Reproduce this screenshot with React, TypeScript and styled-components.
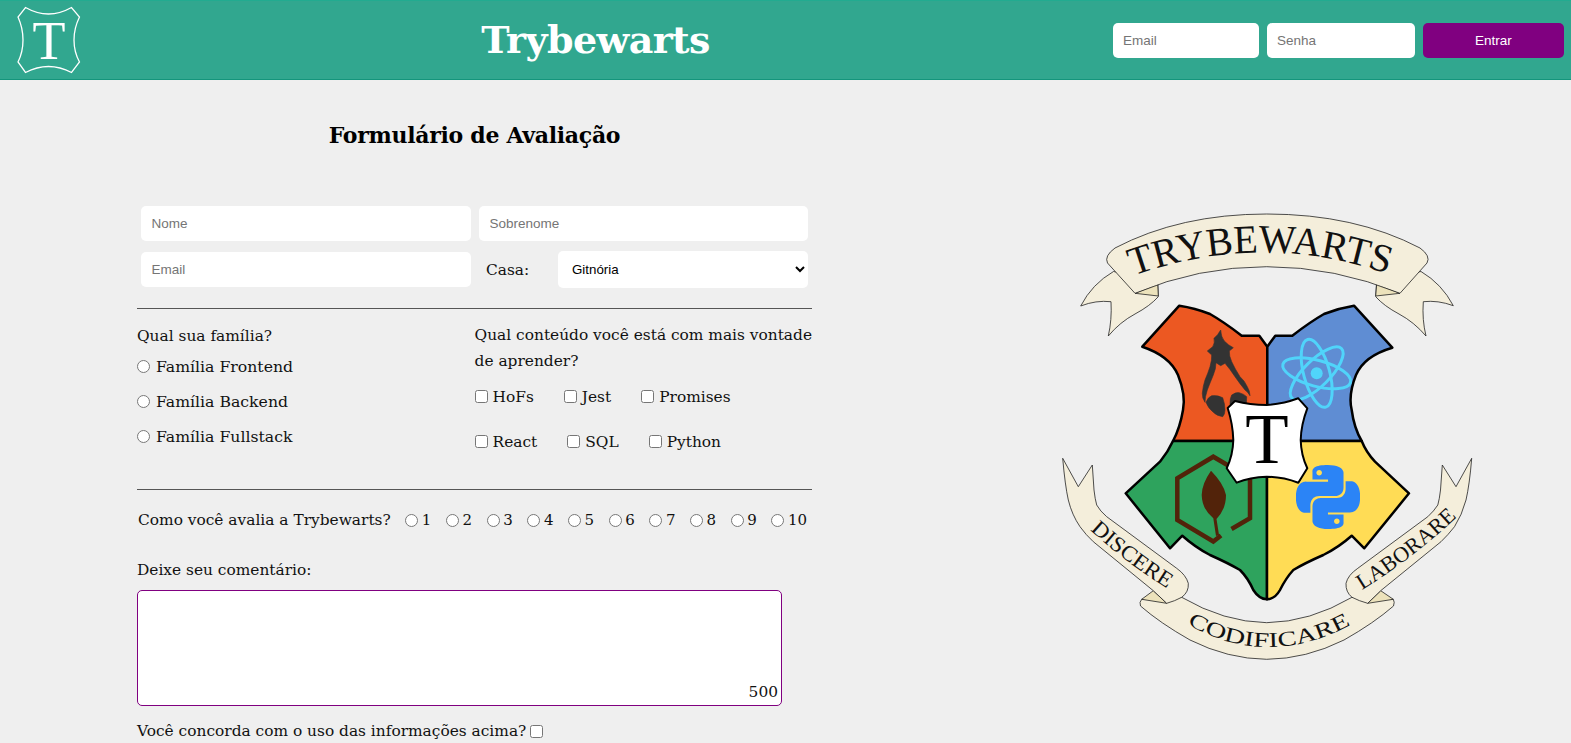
import * as React from 'react'
import styled, { createGlobalStyle } from 'styled-components'
import { SiPython } from 'react-icons/si'

const bodyFont = '"DejaVu Serif", "Liberation Serif", serif'
const controlFont = '"Liberation Sans", Arial, sans-serif'
const purple = '#800080'
const parchment = '#f4eedb'

const GlobalStyle = createGlobalStyle`
  html, body {
    margin: 0;
    height: 100%;
    overflow: hidden;
    background: #efefef;
  }

  body {
    font-family: ${bodyFont};
    font-size: 15.4px;
    color: #111;
  }

  * {
    box-sizing: border-box;
  }
`

const Header = styled.header`
  display: flex;
  align-items: center;
  justify-content: space-between;
  height: 80px;
  padding: 0 7px 0 17px;
  background: #31a78f;
  border-top: 1px solid #22ab90;
  border-bottom: 1px solid #14957c;
`

const Logo = styled.svg`
  display: block;
  width: 64px;
  height: 68px;
`

const Title = styled.h1`
  margin: 0 3px 0 0;
  color: #fff;
  font-size: 38px;
  line-height: 48px;
  font-weight: 700;
  letter-spacing: -0.6px;
`

const LoginForm = styled.form`
  display: flex;
  gap: 8px;
`

const LoginInput = styled.input<{ $width: number }>`
  width: ${props => props.$width}px;
  height: 35px;
  padding: 0 10px;
  border: 0;
  border-radius: 5px;
  background: #fff;
  font-family: ${controlFont};
  font-size: 13.5px;
  outline: none;
`

const LoginButton = styled.button`
  width: 141px;
  height: 35px;
  border: 0;
  border-radius: 5px;
  background: ${purple};
  color: #fff;
  font-family: ${controlFont};
  font-size: 13.5px;
`

const Main = styled.main`
  display: flex;
  align-items: flex-start;
  padding-left: 137px;
`

const EvaluationForm = styled.form`
  width: 675px;
  flex: none;
`

const FormTitle = styled.h2`
  margin: 35px 0 0;
  font-size: 22px;
  line-height: 40px;
  font-weight: 700;
  text-align: center;
  letter-spacing: -0.3px;
  color: #000;
`

const Fields = styled.div`
  display: grid;
  grid-template-columns: 330px 329px;
  grid-template-rows: 35px 37px;
  column-gap: 8px;
  row-gap: 10px;
  margin-top: 51px;
  padding: 0 4px;
`

const TextField = styled.input`
  width: 100%;
  height: 35px;
  padding: 0 10.5px;
  border: 0;
  border-radius: 5px;
  background: #fff;
  font-family: ${controlFont};
  font-size: 13.5px;
  align-self: center;
`

const HouseField = styled.label`
  display: flex;
  align-items: center;
  justify-content: space-between;
  padding-left: 7px;
`

const HouseSelect = styled.select`
  width: 250px;
  height: 37px;
  padding: 0 10px;
  border: 0;
  border-radius: 5px;
  background: #fff;
  color: #000;
  font-family: ${controlFont};
  font-size: 13.33px;
`

const Divider = styled.hr<{ $top: number }>`
  height: 1px;
  margin: ${props => props.$top}px 0 0;
  border: 0;
  background: #555;
`

const Preferences = styled.div`
  display: flex;
  margin-top: 14px;
`

const FamilyColumn = styled.fieldset`
  width: 338px;
  margin: 0;
  padding: 0;
  border: 0;
`

const ContentColumn = styled.fieldset`
  width: 337px;
  margin: -1px 0 0;
  padding: 0;
  border: 0;
`

const Question = styled.p`
  margin: 0;
  line-height: 26px;
  white-space: nowrap;
`

const Option = styled.label`
  display: flex;
  align-items: center;
  gap: 5px;
  height: 35px;
  white-space: nowrap;

  input {
    margin: 0;
    flex: none;
  }
`

const FamilyOption = styled(Option)`
  gap: 6px;
  font-size: 15.7px;
`

const CheckRow = styled.div`
  display: flex;
  align-items: center;
  gap: 30px;
  height: 45px;
`

const CheckOption = styled(Option)`
  height: auto;
`

const Rating = styled.div`
  display: flex;
  align-items: center;
  justify-content: space-between;
  height: 26px;
  margin-top: 17px;
  padding: 0 5px 0 1px;
`

const RatingLabel = styled.span`
  white-space: nowrap;
`

const RatingOption = styled(Option)`
  height: auto;
  gap: 3.5px;
  font-size: 15px;
`

const CommentLabel = styled.label`
  display: block;
  margin-top: 24px;
  line-height: 26px;
`

const CommentBox = styled.div`
  position: relative;
  width: 645px;
  height: 116px;
  margin-top: 7px;
`

const Comment = styled.textarea`
  display: block;
  width: 100%;
  height: 100%;
  border: 1px solid ${purple};
  border-radius: 5px;
  background: #fff;
  resize: none;
`

const Counter = styled.span`
  position: absolute;
  right: 4px;
  bottom: 4px;
  font-size: 15.4px;
  line-height: 20px;
  pointer-events: none;
`

const Agreement = styled.label`
  display: flex;
  align-items: center;
  gap: 4px;
  height: 26px;
  margin-top: 12px;
  white-space: nowrap;

  input {
    margin: 0;
  }
`

const Crest = styled.svg`
  display: block;
  flex: none;
  width: 420px;
  height: 455px;
  margin: 130px 0 0 243px;
`

const BannerText = styled.text<{ $size: number }>`
  font-family: "Liberation Serif", serif;
  font-size: ${props => props.$size}px;
  fill: #111;
`

const CrestLetter = styled.text`
  font-family: "Liberation Serif", serif;
  font-size: 71px;
  fill: #000;
  text-anchor: middle;
`

const LogoLetter = styled.text`
  font-family: "Liberation Serif", serif;
  font-size: 54px;
  fill: #fff;
  text-anchor: middle;
`

const families = ['Família Frontend', 'Família Backend', 'Família Fullstack']
const contentRows = [
  ['HoFs', 'Jest', 'Promises'],
  ['React', 'SQL', 'Python']
]
const ratings = ['1', '2', '3', '4', '5', '6', '7', '8', '9', '10']

const HeaderLogo = () => (
  <Logo viewBox="17 6 64 68" aria-hidden="true">
    <path
      d="M25.5 7.5 Q37 14 48.5 14 Q60 14 71.5 7.5 L79.5 17 Q74 28 74 40 Q74 52 79.5 62 L71.5 72.5 Q60 66.5 48.5 66.5 Q37 66.5 25.5 72.5 L18 62 Q23 52 23 40 Q23 28 18 17 Z"
      fill="none"
      stroke="#fff"
      strokeWidth="1.3"
    />
    <LogoLetter x="49" y="59">T</LogoLetter>
  </Logo>
)

const CrestImage = () => (
  <Crest viewBox="1055 210 420 455" role="img" aria-label="Brasão da Trybewarts">
    <defs>
      <path id="arc-top" d="M1133 276 Q1260 230 1388 274" />
      <path id="arc-left" d="M1090 530 Q1125 562 1168 589" />
      <path id="arc-middle" d="M1187 624 Q1267 670 1352 624" />
      <path id="arc-right" d="M1362 590 Q1415 557 1458 516" />
    </defs>

    <g fill={parchment} stroke="#222" strokeWidth="0.8" strokeLinejoin="round">
      <path d="M1113.5 271.5 Q1092 284 1080.7 306 Q1096 300 1111 301.7 Q1112 320 1108.3 336 Q1120 322 1135 314 Q1150 306 1158.3 296.7 L1157.7 280 Z" />
      <path d="M1421 271.5 Q1442 284 1453.3 305.7 Q1438 300 1423.3 301.7 Q1422 320 1426 336 Q1414 322 1399 314 Q1384 306 1375.7 296.7 L1376.7 280 Z" />
      <path d="M1135 293.3 L1158.3 296 L1157.7 284 Z" fill="#ece2bb" />
      <path d="M1400 293.3 L1375.7 296 L1376.7 284 Z" fill="#ece2bb" />
      <path d="M1135 293.3 L1107.5 263 Q1104 256 1115 248 Q1180 214 1266.7 214 Q1355 214 1420 248 Q1431 256 1427 263 L1400 293.3 Q1335 266.7 1266.7 266.7 Q1198 266.7 1135 293.3 Z" />

      <path d="M1141.7 599.3 Q1139 602 1140.5 606 Q1160 623 1190 640 Q1228 659 1266.7 659.3 Q1306 659 1344 640 Q1374 623 1393.5 606 Q1395 602 1393.3 599.3 L1352 597.3 Q1310 622 1266.7 622.7 Q1224 622 1181.7 597.3 Z" />
      <path d="M1141.7 599.3 L1153.3 590.7 L1166.7 603.3 Z" fill="#ece2bb" />
      <path d="M1393.3 599.3 L1380.7 590.7 L1367.7 603.3 Z" fill="#ece2bb" />
      <path d="M1062.7 458.3 L1078.3 486.7 L1092.3 465 L1094 490 Q1095 499 1096.7 505 Q1100 511 1106.7 516.7 L1176.7 568.3 Q1186 575 1188.3 583.3 Q1189 592 1181.7 597.3 Q1175 601 1166.7 603.3 L1153.3 590.7 L1093.3 541.7 Q1086 535 1080 526.7 Q1072 515 1068.3 500 Q1065 485 1062.7 458.3 Z" />
      <path d="M1471.7 458.3 L1456 486.7 L1442.3 465 L1440.5 490 Q1439.5 499 1437.8 505 Q1434 511 1427.8 516.7 L1357.8 568.3 Q1348 575 1346 583.3 Q1345.5 592 1352 597.3 Q1359 601 1367.7 603.3 L1380.7 590.7 L1441 541.7 Q1448 535 1454.5 526.7 Q1462 515 1466 500 Q1469.5 485 1471.7 458.3 Z" />
    </g>

    <BannerText $size={40}>
      <textPath href="#arc-top" textLength="260" lengthAdjust="spacingAndGlyphs">TRYBEWARTS</textPath>
    </BannerText>
    <BannerText $size={22}>
      <textPath href="#arc-left" textLength="97" lengthAdjust="spacingAndGlyphs">DISCERE</textPath>
    </BannerText>
    <BannerText $size={21}>
      <textPath href="#arc-middle" textLength="172" lengthAdjust="spacingAndGlyphs">CODIFICARE</textPath>
    </BannerText>
    <BannerText $size={22}>
      <textPath href="#arc-right" textLength="120" lengthAdjust="spacingAndGlyphs">LABORARE</textPath>
    </BannerText>

    <g stroke="#000" strokeWidth="2.5" strokeLinejoin="round">
      <path
        fill="#ec5822"
        d="M1267.3 346.7 L1259.3 335.7 L1241.7 335.7 Q1224 322 1210 314 Q1195 308 1179.3 305.7 L1142.3 346.7 Q1170 356 1178 375 Q1186 395 1183 410 Q1180 428 1173 441 L1267.3 441 Z"
      />
      <path
        fill="#5f8dd3"
        d="M1267.3 346.7 L1275.3 335.7 L1292.3 335.7 Q1310 322 1324 314 Q1339 308 1354 305.7 L1392.3 347.7 Q1364 356 1356 375 Q1348 395 1351.7 410 Q1354 428 1361.7 441 L1267.3 441 Z"
      />
      <path
        fill="#2ea35d"
        d="M1173 441 Q1168 452 1160 461.7 L1125.7 493.3 L1170 548.3 L1182.3 535.7 Q1195 547 1210 555 Q1228 563 1240 570 Q1248 578 1253.3 590 Q1259 599 1267 599.3 L1267 441 Z"
      />
      <path
        fill="#ffdc55"
        d="M1361.7 441 Q1366 452 1375 461.7 L1409 493.3 L1364.3 548.3 L1351.7 535.7 Q1339 547 1323.3 555 Q1305 563 1293.3 570 Q1286 578 1280 590 Q1275 599 1267 599.3 L1267 441 Z"
      />
    </g>

    <g fill="#333" stroke="#333" strokeWidth="0.6" strokeLinejoin="round">
      <path d="M1220.7 330 Q1221 337 1224.3 341 Q1228 345 1233.3 347.7 L1229.3 351 Q1229 356 1231.7 361.7 Q1235 369 1240 376.7 Q1245 381 1247.3 386.7 Q1250 391 1250 395.7 Q1248 392 1245 390 Q1240 384 1235 376.7 Q1230 369 1225 363.3 L1220.7 365.7 L1216 362.7 Q1216 369 1213.3 375 Q1210 383 1207.3 390 Q1205 397 1205 402.3 Q1202 398 1202.3 393.3 Q1203 386 1205 380 Q1208 373 1210 366.7 Q1212 360 1211.7 355 L1207.3 351 L1212.7 346.7 Q1215 343 1214 338.3 Q1218 335 1220.7 330 Z" />
      <path d="M1206 402.3 Q1208 397 1211.7 395.7 Q1218 395 1222.7 397.7 Q1225 404 1225 410 Q1225 414 1222.7 416.7 Q1217 416 1213.3 412.3 Q1208 408 1206 402.3 Z" />
      <path d="M1230 403.3 Q1230 398 1231.7 395 Q1236 392 1239.3 392.7 Q1244 394 1246.7 396.7 L1246 410 L1232 410 Z" />
    </g>

    <g fill="none" stroke="#50d4fa" strokeWidth="3">
      <ellipse cx="1316.7" cy="373.3" rx="35" ry="13" transform="rotate(15 1316.7 373.3)" />
      <ellipse cx="1316.7" cy="373.3" rx="35" ry="13" transform="rotate(75 1316.7 373.3)" />
      <ellipse cx="1316.7" cy="373.3" rx="35" ry="13" transform="rotate(135 1316.7 373.3)" />
    </g>
    <circle cx="1316.7" cy="373.3" r="6" fill="#50d4fa" />

    <polyline
      points="1231.5,529 1250,518.3 1250,478.3 1213.3,456.7 1177.3,478.3 1177.3,520 1213.3,541.5 1221,535.5"
      fill="none"
      stroke="#52230a"
      strokeWidth="4.5"
    />
    <path
      d="M1211 470.7 Q1201.7 484 1201.7 495 Q1202 509 1213.3 518.3 L1216 536 L1219 535 L1216.5 519 Q1226 509 1226 495 Q1224 484 1211 470.7 Z"
      fill="#52230a"
    />

    <path
      d="M1227.7 408 L1235 401 Q1250 405 1266.7 405 Q1283 404 1298.3 398.3 L1307.3 408.3 Q1301 425 1300.7 440 Q1301 455 1307.3 468.3 L1298.3 482.7 Q1283 477 1266.7 476.7 Q1250 477 1236.7 482.7 L1226.7 468.3 Q1233 455 1233.3 440 Q1233 425 1227.7 408 Z"
      fill="#fff"
      stroke="#000"
      strokeWidth="2"
      strokeLinejoin="round"
    />
    <CrestLetter x="1267" y="463">T</CrestLetter>

    <SiPython x={1296} y={465} size={64} color="#2b84f6" />
  </Crest>
)

export default function App() {
  return (
    <>
      <GlobalStyle />
      <Header>
        <HeaderLogo />
        <Title>Trybewarts</Title>
        <LoginForm>
          <LoginInput $width={146} type="email" placeholder="Email" />
          <LoginInput $width={148} type="password" placeholder="Senha" />
          <LoginButton type="button">Entrar</LoginButton>
        </LoginForm>
      </Header>

      <Main>
        <EvaluationForm>
          <FormTitle>Formulário de Avaliação</FormTitle>

          <Fields>
            <TextField placeholder="Nome" />
            <TextField placeholder="Sobrenome" />
            <TextField placeholder="Email" />
            <HouseField>
              Casa:
              <HouseSelect defaultValue="Gitnória">
                <option>Gitnória</option>
                <option>Reactpuff</option>
                <option>Corvinode</option>
                <option>Pytherina</option>
              </HouseSelect>
            </HouseField>
          </Fields>

          <Divider $top={20} />

          <Preferences>
            <FamilyColumn>
              <Question>Qual sua família?</Question>
              {families.map(family => (
                <FamilyOption key={family}>
                  <input type="radio" name="family" />
                  {family}
                </FamilyOption>
              ))}
            </FamilyColumn>

            <ContentColumn>
              <Question>Qual conteúdo você está com mais vontade</Question>
              <Question>de aprender?</Question>
              {contentRows.map(row => (
                <CheckRow key={row[0]}>
                  {row.map(subject => (
                    <CheckOption key={subject}>
                      <input type="checkbox" />
                      {subject}
                    </CheckOption>
                  ))}
                </CheckRow>
              ))}
            </ContentColumn>
          </Preferences>

          <Divider $top={25} />

          <Rating>
            <RatingLabel>Como você avalia a Trybewarts?</RatingLabel>
            {ratings.map(rate => (
              <RatingOption key={rate}>
                <input type="radio" name="rate" />
                {rate}
              </RatingOption>
            ))}
          </Rating>

          <CommentLabel>Deixe seu comentário:</CommentLabel>
          <CommentBox>
            <Comment />
            <Counter>500</Counter>
          </CommentBox>

          <Agreement>
            Você concorda com o uso das informações acima?
            <input type="checkbox" />
          </Agreement>
        </EvaluationForm>

        <CrestImage />
      </Main>
    </>
  )
}
